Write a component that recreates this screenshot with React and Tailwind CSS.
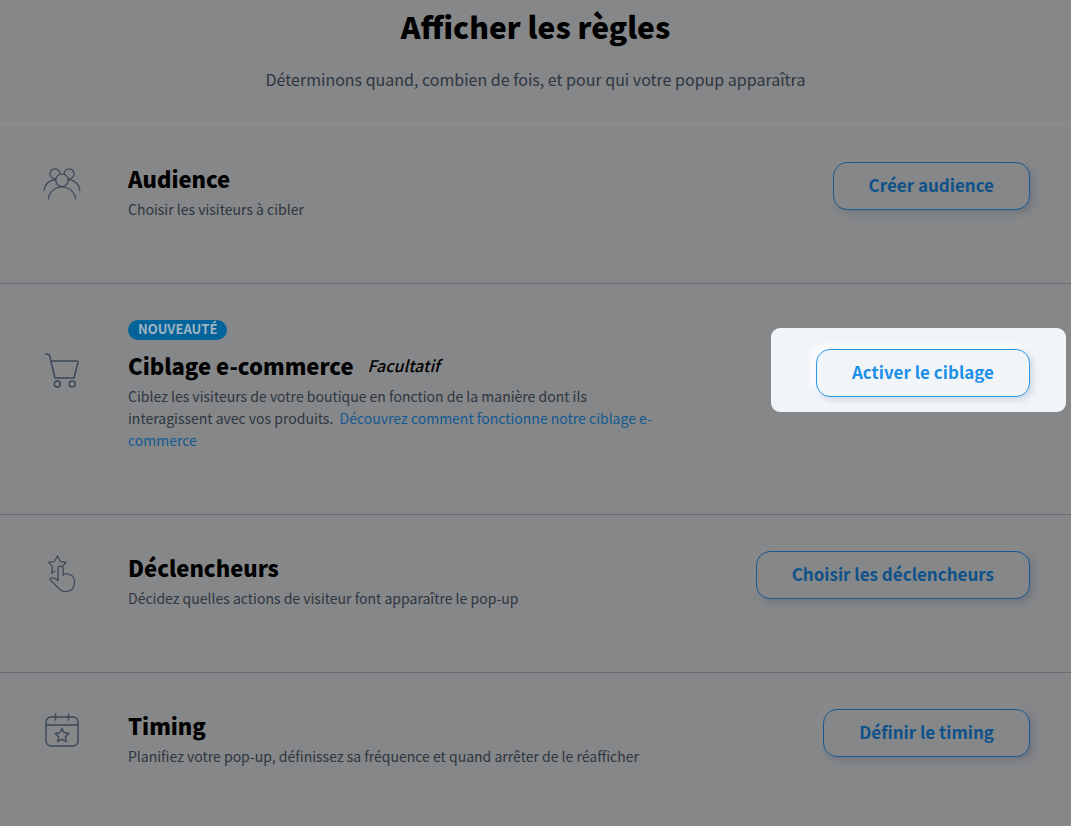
import React from "react";

const stroke = {
  fill: "none",
  stroke: "currentColor",
  strokeLinecap: "round",
  strokeLinejoin: "round",
};

function AudienceIcon() {
  return (
    <svg width="38" height="34" viewBox="0 0 38 34" strokeWidth="1.2" {...stroke} aria-hidden="true">
      <circle cx="19" cy="14.300" r="6.300" />
      <path d="M12.700 12.800A5 5 0 1 1 16.900 8.200M25.300 12.800A5 5 0 1 0 21.100 8.200" />
      <path d="M5.500 32.800C6 26 12 21 19 21s13 5 13.500 11.800" />
      <path d="M1.200 24.500C1.600 18.500 6.500 13.500 13 14M36.800 24.500C36.400 18.500 31.500 13.500 25 14" />
    </svg>
  );
}

function CartIcon() {
  return (
    <svg width="38" height="36" viewBox="0 0 38 36" strokeWidth="1.5" {...stroke} aria-hidden="true">
      <path d="M2.500 1.300h2.200q1.500 0 1.900 1.500L12 25h19l4-15.500q.3-1.500-1.200-1.500H8.300" />
      <circle cx="14.300" cy="31" r="3" />
      <circle cx="29.200" cy="31" r="3" />
    </svg>
  );
}

function TriggerIcon() {
  return (
    <svg width="38" height="38" viewBox="0 0 38 38" strokeWidth="1.2" {...stroke} aria-hidden="true">
      <path d="M11.8 16.2l-3.3 2 1-6.8-3.9-4.1 5.7-.8L14.6 1l2.7 5.5 5.8.8-3.3 3.6" />
      <path d="M15 25.5V14q0-2.8 2.6-2.8T20.2 14v6.5q2.2-3.3 5-1.2 5.8.6 6.2 5.7v3q0 8.3-9 8.5-3 0-5.4-1.8L7.2 24.8q-.5-1.6 1.2-1.8 3.2-.3 6.6 2.500" />
    </svg>
  );
}

function TimingIcon() {
  return (
    <svg width="38" height="36" viewBox="0 0 38 36" strokeWidth="1.4" {...stroke} aria-hidden="true">
      <rect x="3" y="4" width="32" height="29" rx="5" />
      <path d="M3 12h32M12.500 1v6M25.500 1v6" />
      <path d="M19 15.500l2.100 4.300 4.700.7-3.400 3.300.8 4.700-4.200-2.200-4.200 2.200.8-4.700-3.400-3.300 4.700-.7z" />
    </svg>
  );
}

function ActionButton({ children, highlighted }) {
  if (highlighted) {
    return (
      <div className="relative">
        <div className="absolute -top-[21px] -right-9 -bottom-[15px] -left-[45px] rounded-[9px] bg-[#f2f5f8]" />
        <button
          type="button"
          className="relative h-12 rounded-[14px] border border-[#2b95e6] bg-[#f2f5f8] px-[35px] pb-0.5 text-[17px] font-bold whitespace-nowrap text-[#1c8fe8] shadow-[3px_3px_6px_#cdd7e4,-4px_-4px_7px_#ffffff]"
        >
          {children}
        </button>
      </div>
    );
  }
  return (
    <button
      type="button"
      className="h-12 rounded-[14px] border border-[#1a5a92] bg-[#858789] px-[35px] pb-0.5 text-[17px] font-bold whitespace-nowrap text-[#0f5189] shadow-[3px_3px_6px_#70757c,-4px_-4px_7px_#8c8c8e]"
    >
      {children}
    </button>
  );
}

function Rule({ icon, title, badge, note, action, highlighted, children }) {
  return (
    <section className="flex items-start border-b border-[#686c71] pt-9 pr-[41px] pb-[63px] pl-[43px] last:border-b-0">
      <div className={badge ? "w-[85px] shrink-0 pt-[33px] text-[#3b4857]" : "w-[85px] shrink-0 pt-1 text-[#3b4857]"}>
        {icon}
      </div>
      <div className="min-w-0 flex-1">
        {badge && (
          <div className="mb-[9px] flex">
            <span className="flex h-5 items-center rounded-full bg-[#03639a] px-2.5 pb-0.5 text-[13px] font-bold text-[#9fb4c2]">
              {badge}
            </span>
          </div>
        )}
        <div className="mb-1 flex h-8 items-center gap-[14px]">
          <h2 className="text-[22px] leading-8 font-black text-black">{title}</h2>
          {note && <em className="text-base leading-7 font-medium text-black">{note}</em>}
        </div>
        <p className="max-w-[535px] text-sm leading-[22px] text-[#2f3640]">{children}</p>
      </div>
      <div className={badge ? "shrink-0 pt-[29px]" : "shrink-0"}>
        <ActionButton highlighted={highlighted}>{action}</ActionButton>
      </div>
    </section>
  );
}

export default function App() {
  return (
    <main className="min-h-screen bg-[#858789] font-['Noto_Sans_CJK_JP','Noto_Sans',sans-serif]">
      <header className="flex flex-col items-center border-b-[5px] border-[#8a898c] pt-0.5 pb-[30px] text-center">
        <h1 className="text-[30px] leading-[48px] font-black text-black">Afficher les règles</h1>
        <p className="mt-[17px] text-base leading-6 text-[#2f3640]">
          Déterminons quand, combien de fois, et pour qui votre popup apparaîtra
        </p>
      </header>
      <Rule icon={<AudienceIcon />} title="Audience" action="Créer audience">
        Choisir les visiteurs à cibler
      </Rule>
      <Rule
        icon={<CartIcon />}
        badge="NOUVEAUTÉ"
        title="Ciblage e-commerce"
        note="Facultatif"
        action="Activer le ciblage"
        highlighted
      >
        Ciblez les visiteurs de votre boutique en fonction de la manière dont ils interagissent avec
        vos produits.&nbsp;{" "}
        <a href="#ciblage" className="text-[#135a92]">
          Découvrez comment fonctionne notre ciblage e-commerce
        </a>
      </Rule>
      <Rule icon={<TriggerIcon />} title="Déclencheurs" action="Choisir les déclencheurs">
        Décidez quelles actions de visiteur font apparaître le pop-up
      </Rule>
      <Rule icon={<TimingIcon />} title="Timing" action="Définir le timing">
        Planifiez votre pop-up, définissez sa fréquence et quand arrêter de le réafficher
      </Rule>
    </main>
  );
}
